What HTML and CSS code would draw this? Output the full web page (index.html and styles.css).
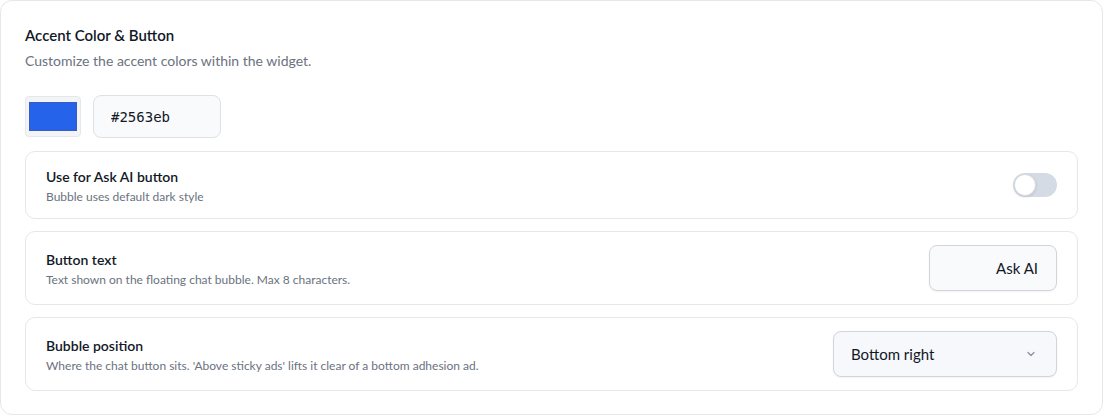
FILE: index.html
```html
<!DOCTYPE html>
<html lang="en">
<head>
    <meta charset="UTF-8">
    <meta name="viewport" content="width=device-width, initial-scale=1.0">
    <title>Accent Color &amp; Button</title>
    <link rel="stylesheet" href="styles.css">
</head>
<body>
    <div class="card">
        <h2 class="card-title">Accent Color &amp; Button</h2>
        <p class="card-sub">Customize the accent colors within the widget.</p>

        <!-- color picker -->
        <div class="color-row">
            <div class="swatch"><span class="swatch-fill"></span></div>
            <input type="text" class="hex-input" value="#2563eb">
        </div>

        <div class="setting">
            <div class="setting-text">
                <div class="setting-label">Use for Ask AI button</div>
                <div class="setting-desc">Bubble uses default dark style</div>
            </div>
            <span class="toggle"><span class="knob"></span></span>
        </div>

        <div class="setting">
            <div class="setting-text">
                <div class="setting-label">Button text</div>
                <div class="setting-desc">Text shown on the floating chat bubble. Max 8 characters.</div>
            </div>
            <input type="text" class="text-input" value="Ask AI">
        </div>

        <div class="setting">
            <div class="setting-text">
                <div class="setting-label">Bubble position</div>
                <div class="setting-desc">Where the chat button sits. 'Above sticky ads' lifts it clear of a bottom adhesion ad.</div>
            </div>
            <div class="select">
                <span>Bottom right</span>
                <svg width="12" height="12" viewBox="0 0 12 12" fill="none" stroke="#8b93a1" stroke-width="1.3" stroke-linecap="round" stroke-linejoin="round"><path d="M3 4.5l3 3 3-3"/></svg>
            </div>
        </div>
    </div>
</body>
</html>
```

FILE: styles.css
```css
body {
    font-family: Lato, "Noto Sans", sans-serif;
    background-color: #fff;
    margin: 0;
    padding: 0;
    color: #111827;
}

.card {
    box-sizing: border-box;
    width: 1103px;
    height: 415px;
    border: 1px solid #e5e7eb;
    border-radius: 12px;
    padding: 23px 24px 24px;
    background: #fff;
}

.card-title {
    margin: 0;
    font-size: 15px;
    font-weight: 600;
    line-height: 22px;
    color: #111827;
}

.card-sub {
    margin: 5px 0 0;
    font-size: 14px;
    line-height: 20px;
    color: #6b7280;
}

.color-row {
    display: flex;
    align-items: center;
    gap: 12px;
    margin-top: 24px;
    margin-bottom: 13px;
}

.swatch {
    box-sizing: border-box;
    width: 56px;
    height: 41px;
    padding: 5px 3px;
    border: 1px solid #e5e7eb;
    border-radius: 4px;
    background: #f3f4f6;
    display: flex;
}

.swatch-fill {
    flex: 1;
    background: #2563eb;
    border: 1px solid #3a5bc0;
}

.hex-input {
    box-sizing: border-box;
    width: 128px;
    height: 43px;
    padding: 0 17px;
    border: 1px solid #dde1e8;
    border-radius: 8px;
    background: #f9fafb;
    font-family: "DejaVu Sans Mono", monospace;
    font-size: 14px;
    color: #111827;
    outline: none;
}

.setting {
    box-sizing: border-box;
    display: flex;
    align-items: center;
    justify-content: space-between;
    border: 1px solid #e5e7eb;
    border-radius: 10px;
    padding: 13px 20px;
    min-height: 68px;
    margin-bottom: 12px;
}

.setting:last-child {
    margin-bottom: 0;
}

.setting-text {
    padding-top: 2px;
}

.setting-label {
    font-size: 14px;
    font-weight: 600;
    line-height: 20px;
    color: #111827;
}

.setting-desc {
    font-size: 12px;
    line-height: 16px;
    margin-top: 2px;
    color: #6b7280;
}

.toggle {
    position: relative;
    width: 44px;
    height: 24px;
    border-radius: 12px;
    background: #d5dbe4;
    flex-shrink: 0;
}

.knob {
    position: absolute;
    left: 1px;
    top: 1px;
    box-sizing: border-box;
    width: 22px;
    height: 22px;
    border-radius: 50%;
    background: #fff;
    border: 1px solid #d9dde3;
    box-shadow: 0 1px 3px rgba(0, 0, 0, 0.12);
}

.text-input {
    box-sizing: border-box;
    width: 128px;
    height: 46px;
    padding: 0 18px;
    border: 1px solid #d1d5db;
    border-radius: 8px;
    background: #f9fafb;
    font-family: Lato, sans-serif;
    font-size: 15px;
    text-align: right;
    color: #111827;
    outline: none;
    box-shadow: 0 1px 2px rgba(0, 0, 0, 0.05);
}

.select {
    box-sizing: border-box;
    width: 224px;
    height: 46px;
    display: flex;
    align-items: center;
    justify-content: space-between;
    padding: 0 19px 0 17px;
    border: 1px solid #d1d5db;
    border-radius: 8px;
    background: #f7f8fb;
    font-size: 15px;
    color: #111827;
    box-shadow: 0 1px 2px rgba(0, 0, 0, 0.05);
}
```
